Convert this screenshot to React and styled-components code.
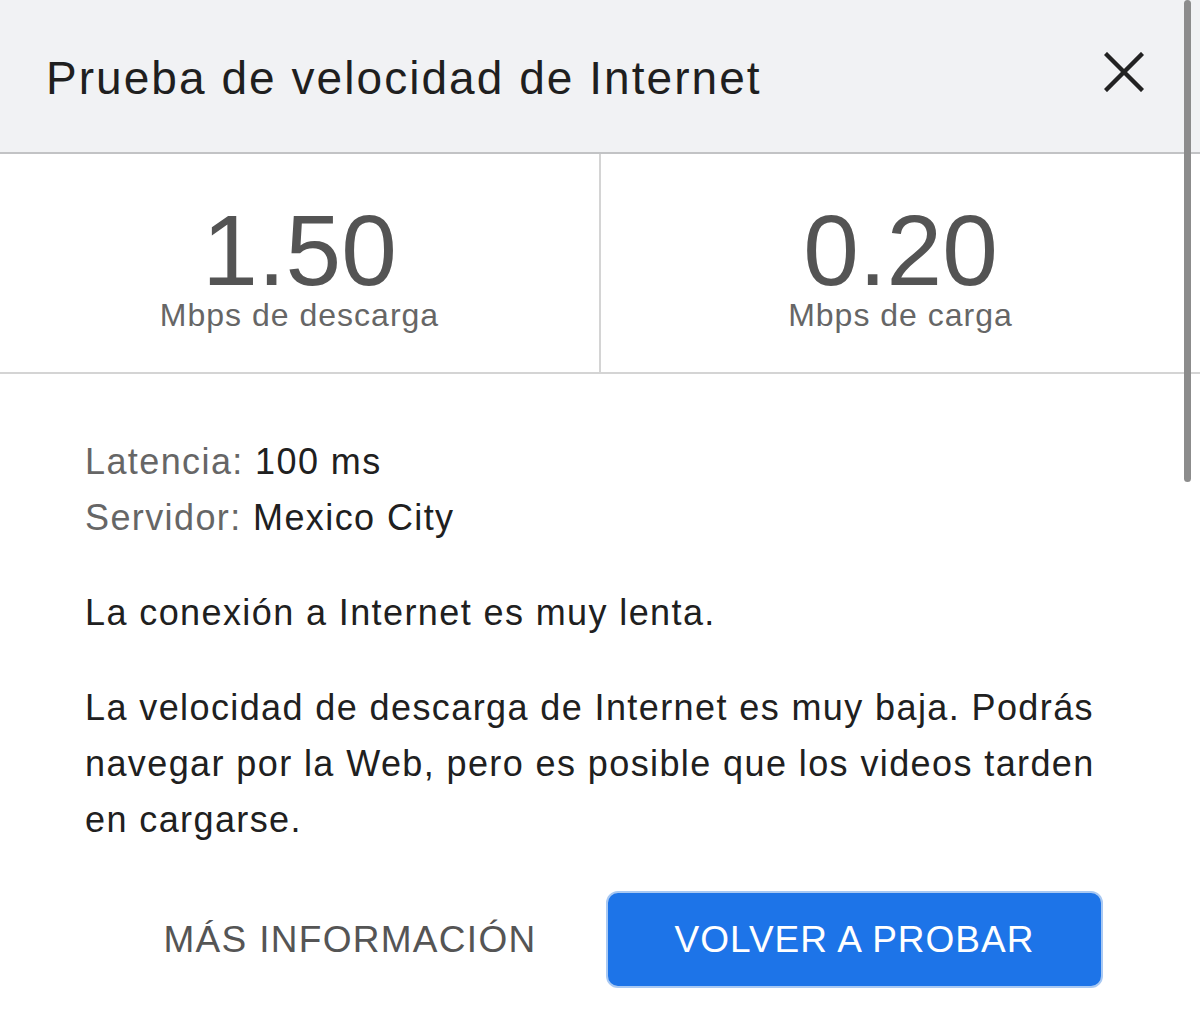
import React from "react";
import styled, { createGlobalStyle } from "styled-components";

const GlobalStyle = createGlobalStyle`
  html, body {
    margin: 0;
    padding: 0;
    background: #ffffff;
  }
  body {
    font-family: "Liberation Sans", Arial, sans-serif;
    -webkit-font-smoothing: antialiased;
  }
`;

function App() {
  return (
    <>
      <GlobalStyle />
      <Page>
        <Header>
          <Title>Prueba de velocidad de Internet</Title>
          <CloseButton aria-label="Cerrar">
            <svg width="40" height="40" viewBox="0 0 40 40">
              <path d="M3 3 L37 37 M37 3 L3 37" stroke="#222" strokeWidth="4.4" strokeLinecap="square" />
            </svg>
          </CloseButton>
        </Header>
        <Stats>
          <Stat>
            <Value>1.50</Value>
            <Unit>Mbps de descarga</Unit>
          </Stat>
          <Stat $divider>
            <Value>0.20</Value>
            <Unit>Mbps de carga</Unit>
          </Stat>
        </Stats>
        <Body>
          <Details>
            <div>
              <Label>Latencia:</Label> 100 ms
            </div>
            <div>
              <Label>Servidor:</Label> Mexico City
            </div>
          </Details>
          <Text>La conexión a Internet es muy lenta.</Text>
          <Text>
            La velocidad de descarga de Internet es muy baja. Podrás navegar por la Web, pero es posible que los videos tarden en cargarse.
          </Text>
        </Body>
        <Actions>
          <TextButton>MÁS INFORMACIÓN</TextButton>
          <PrimaryButton>VOLVER A PROBAR</PrimaryButton>
        </Actions>
        <Scrollbar />
      </Page>
    </>
  );
}

export default App;

const Page = styled.div`
  position: relative;
  width: 1200px;
  height: 1033px;
  overflow: hidden;
  background: #fff;
`;

const Header = styled.div`
  display: flex;
  align-items: center;
  justify-content: space-between;
  height: 154px;
  padding: 3px 56px 0 46px;
  box-sizing: border-box;
  background: #f1f2f4;
  border-bottom: 2px solid #c2c3c5;
`;

const Title = styled.h1`
  margin: 0;
  font-size: 46px;
  font-weight: 400;
  color: #1f1f1f;
  letter-spacing: 2.05px;
`;

const CloseButton = styled.div`
  display: flex;
  width: 40px;
  height: 40px;
  margin-top: -11px;
`;

const Stats = styled.div`
  display: grid;
  grid-template-columns: 599px 1fr;
  height: 218px;
  border-bottom: 2px solid #d4d4d4;
`;

const Stat = styled.div`
  display: flex;
  flex-direction: column;
  align-items: center;
  padding-top: 51px;
  border-left: ${(p) => (p.$divider ? "2px solid #d4d4d4" : "none")};
`;

const Value = styled.div`
  font-size: 100px;
  line-height: 90px;
  color: #545454;
`;

const Unit = styled.div`
  margin-top: 2px;
  font-size: 32px;
  color: #666;
  letter-spacing: 1px;
`;

const Body = styled.div`
  padding: 60px 85px 0 85px;
  color: #202020;
  font-size: 36px;
  letter-spacing: 1.4px;
`;

const Details = styled.div`
  line-height: 56px;
  margin-bottom: 39px;
`;

const Label = styled.span`
  color: #666;
`;

const Text = styled.p`
  margin: 0 0 39px 0;
  line-height: 56px;
`;

const Actions = styled.div`
  display: grid;
  grid-template-columns: 1fr 497px;
  align-items: center;
  padding: 4px 97px 0 116px;
`;

const TextButton = styled.div`
  text-align: center;
  font-size: 37px;
  color: #555;
  letter-spacing: 1.3px;
  padding-right: 22px;
`;

const PrimaryButton = styled.div`
  display: flex;
  align-items: center;
  justify-content: center;
  height: 97px;
  box-sizing: border-box;
  border-radius: 12px;
  background: #1d74e8;
  border: 2px solid #a9c9f3;
  color: #fff;
  font-size: 37px;
  letter-spacing: 1px;
`;

const Scrollbar = styled.div`
  position: absolute;
  top: 0;
  right: 9px;
  width: 7px;
  height: 482px;
  border-radius: 4px;
  background: #8c8c8c;
`;
